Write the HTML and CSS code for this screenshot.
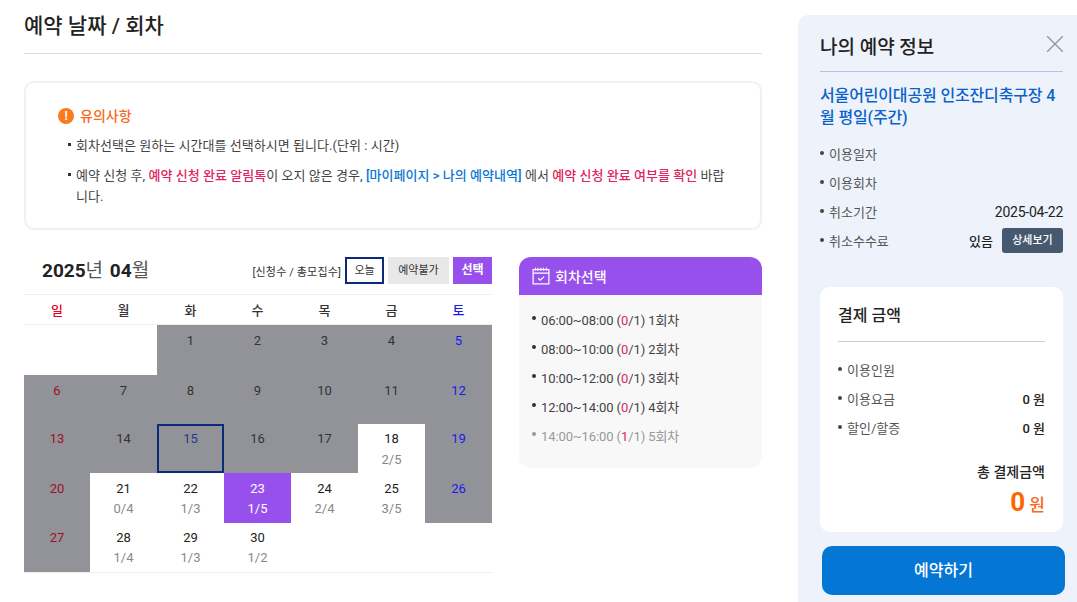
FILE: index.html
```html
<!DOCTYPE html>
<html lang="ko">
<head>
<meta charset="utf-8">
<title>예약 날짜 / 회차</title>
<link rel="stylesheet" href="styles.css">
</head>
<body>
<div class="page">
  <main class="main">
    <h2 class="page-title">예약 날짜 / 회차</h2>
    <section class="notice">
      <h3 class="notice-title"><span class="notice-icon">!</span>유의사항</h3>
      <ul class="notice-list">
        <li>회차선택은 원하는 시간대를 선택하시면 됩니다.(단위 : 시간)</li>
        <li>예약 신청 후, <b class="red">예약 신청 완료 알림톡</b>이 오지 않은 경우, <b class="blue">[마이페이지 &gt; 나의 예약내역]</b> 에서 <b class="red">예약 신청 완료 여부를 확인</b> 바랍니다.</li>
      </ul>
    </section>
    <div class="booking">
      <section class="calendar">
        <div class="cal-head">
          <div class="cal-month"><b>2025</b>년 <b>04</b>월</div>
          <div class="cal-legend">
            <span class="legend-text">[신청수 / 총모집수]</span>
            <span class="legend today">오늘</span>
            <span class="legend closed">예약불가</span>
            <span class="legend picked">선택</span>
          </div>
        </div>
        <table class="cal-table">
          <thead>
            <tr><th class="sun">일</th><th>월</th><th>화</th><th>수</th><th>목</th><th>금</th><th class="sat">토</th></tr>
          </thead>
          <tbody>
            <tr class="r1"><td></td><td></td><td class="off">1</td><td class="off">2</td><td class="off">3</td><td class="off">4</td><td class="off sat">5</td></tr>
            <tr class="r2"><td class="off sun">6</td><td class="off">7</td><td class="off">8</td><td class="off">9</td><td class="off">10</td><td class="off">11</td><td class="off sat">12</td></tr>
            <tr class="r3"><td class="off sun">13</td><td class="off">14</td><td class="off now">15</td><td class="off">16</td><td class="off">17</td><td>18<span class="count wide">2/5</span></td><td class="off sat">19</td></tr>
            <tr class="r4"><td class="off sun">20</td><td>21<span class="count">0/4</span></td><td>22<span class="count">1/3</span></td><td class="sel">23<span class="count">1/5</span></td><td>24<span class="count">2/4</span></td><td>25<span class="count">3/5</span></td><td class="off sat">26</td></tr>
            <tr class="r5"><td class="off sun">27</td><td>28<span class="count">1/4</span></td><td>29<span class="count">1/3</span></td><td>30<span class="count">1/2</span></td><td></td><td></td><td></td></tr>
          </tbody>
        </table>
      </section>
      <section class="rounds">
        <h3 class="rounds-head">
          <svg class="rounds-icon" width="18" height="18" viewBox="0 0 18 18" fill="none" stroke="#fff" stroke-width="1.2">
            <rect x="1.1" y="2.6" width="15.8" height="14.3"/>
            <path d="M1 6.2H17M3.5 .8V3.6M6 .8V3.6M8.8 .8V3.6M11.5 .8V3.6M14.4 .8V3.6"/>
            <path d="M6.2 11.2L8.3 13.2L12 9.6"/>
          </svg>
          회차선택
        </h3>
        <ul class="rounds-list">
          <li>06:00~08:00 (<span class="zero">0</span>/1) 1회차</li>
          <li>08:00~10:00 (<span class="zero">0</span>/1) 2회차</li>
          <li>10:00~12:00 (<span class="zero">0</span>/1) 3회차</li>
          <li>12:00~14:00 (<span class="zero">0</span>/1) 4회차</li>
          <li class="full">14:00~16:00 (<span class="zero">1</span>/1) 5회차</li>
        </ul>
      </section>
    </div>
  </main>
  <aside class="side">
    <div class="side-head">
      <h2 class="side-title">나의 예약 정보</h2>
      <svg class="side-close" width="16" height="16" viewBox="0 0 16 16" fill="none" stroke="#8a94a3" stroke-width="1.3"><path d="M0 0L16 16M16 0L0 16"/></svg>
    </div>
    <p class="product">서울어린이대공원 인조잔디축구장 4월 평일(주간)</p>
    <ul class="info">
      <li><span class="label">이용일자</span></li>
      <li><span class="label">이용회차</span></li>
      <li><span class="label">취소기간</span><span class="date">2025-04-22</span></li>
      <li><span class="label">취소수수료</span><span class="fee"><b>있음</b><span class="detail">상세보기</span></span></li>
    </ul>
    <section class="pay">
      <h3 class="pay-title">결제 금액</h3>
      <ul class="info pay-info">
        <li><span class="label">이용인원</span></li>
        <li><span class="label">이용요금</span><b>0 원</b></li>
        <li><span class="label">할인/할증</span><b>0 원</b></li>
      </ul>
      <div class="total-label">총 결제금액</div>
      <div class="total"><b>0</b> 원</div>
    </section>
    <div class="submit">예약하기</div>
  </aside>
</div>
</body>
</html>
```

FILE: styles.css
```css
* { box-sizing: border-box; }
html, body { margin: 0; height: 602px; overflow: hidden; background: #fff; }
body { font-family: Roboto, "Noto Sans CJK KR", sans-serif; color: #222; font-size: 13px; }
ul { list-style: none; margin: 0; padding: 0; }
h2, h3, p { margin: 0; }

.page { display: flex; gap: 36px; padding-left: 24px; }
.main { width: 738px; flex: none; }
.page-title { height: 54px; padding-top: 11px; border-bottom: 1px solid #dcdcdc; font-size: 21px; line-height: 30px; font-weight: 500; color: #222; }

.notice { margin-top: 27px; height: 149px; border: 2px solid #eef1f6; border-radius: 10px; padding: 23px 32px 0; }
.notice-title { display: flex; align-items: center; gap: 6px; font-size: 14px; line-height: 20px; font-weight: 500; color: #f8691c; }
.notice-icon { width: 16px; height: 16px; border-radius: 50%; background: #f97b1d; color: #fff; font-size: 12px; line-height: 16px; text-align: center; font-weight: 700; }
.notice-list { margin-top: 9px; padding-left: 10px; }
.notice-list li { position: relative; padding-left: 8px; font-size: 13px; line-height: 21px; color: #444; margin-bottom: 9px; letter-spacing: .04px; }
.notice-list li::before { content: ""; position: absolute; left: 0; top: 8px; width: 3px; height: 3px; background: #333; }
.red { color: #e0245e; font-weight: 500; }
.blue { color: #0b77d5; font-weight: 500; }

.booking { display: flex; gap: 27px; margin-top: 27px; }
.calendar { width: 468px; flex: none; }
.cal-head { display: flex; justify-content: space-between; align-items: flex-start; height: 37px; }
.cal-month { padding-left: 18px; font-size: 19px; line-height: 27px; color: #555; word-spacing: 2px; }
.cal-month b { color: #222; font-weight: 700; }
.cal-legend { display: flex; align-items: center; gap: 4px; }
.legend-text { font-size: 11px; color: #333; letter-spacing: .15px; }
.legend { display: block; height: 27px; line-height: 27px; text-align: center; font-size: 11px; color: #333; }
.today { width: 39px; border: 2px solid #0b2a7a; line-height: 24px; background: #fff; }
.closed { width: 61px; background: #e8e8e8; }
.picked { width: 39px; background: #9850ec; color: #fff; font-size: 12px; font-weight: 700; }

.cal-table { width: 468px; border-collapse: collapse; table-layout: fixed; }
.cal-table th { height: 30px; border-top: 1px solid #eee; border-bottom: 1px solid #eee; font-size: 13px; font-weight: 500; color: #333; padding: 0; }
.cal-table th:first-child { width: 66px; }
.cal-table th.sun { color: #e60023; }
.cal-table th.sat { color: #1a1aee; }
.cal-table td { padding: 6px 0 0; vertical-align: top; text-align: center; font-size: 13px; line-height: 20px; color: #222; }
.cal-table tbody tr:last-child { border-bottom: 1px solid #eee; }
.r1 td, .r4 td, .r5 td { height: 50px; }
.r2 td, .r3 td { height: 49px; }
.cal-table .r3 td, .cal-table .r5 td { padding-top: 5px; }
.count { display: block; color: #888; font-size: 13px; }
.count.wide { margin-top: 1px; }
.cal-table td.off { background: #929398; color: #333; }
.cal-table td.off.sun { color: #a01020; }
.cal-table td.off.sat { color: #1a1aee; }
.cal-table td.now { outline: 2px solid #0b2a7a; outline-offset: -2px; color: #1f3b8f; }
.cal-table td.sel { background: #9850ec; color: #fff; }
.sel .count { color: #fff; }

.rounds { width: 243px; flex: none; height: 211px; border-radius: 12px; background: #f8f8f8; overflow: hidden; }
.rounds-head { display: flex; align-items: center; gap: 5px; height: 38px; padding-left: 13px; background: #9850ec; color: #fff; font-size: 14px; font-weight: 500; }
.rounds-list { padding: 11px 13px 0 13px; }
.rounds-list li { position: relative; padding-left: 9px; height: 29px; font-size: 13px; line-height: 29px; color: #444; letter-spacing: -.1px; }
.rounds-list li::before { content: ""; position: absolute; left: 0; top: 10px; width: 4px; height: 4px; border-radius: 50%; background: #333; }
.rounds-list li.full { color: #999; }
.rounds-list li.full::before { background: #999; }
.zero { color: #e0245e; }

.side { width: 279px; flex: none; margin-top: 15px; height: 587px; background: #eef3fb; border-radius: 10px 0 0 0; padding: 0 14px 0 22px; }
.side-head { display: flex; justify-content: space-between; align-items: center; height: 57px; border-bottom: 1px solid #b4c3e4; padding-top: 4px; }
.side-title { font-size: 19px; font-weight: 500; color: #222; }
.side-close { margin-top: -3px; }
.product { margin-top: 13px; font-size: 16px; line-height: 22px; font-weight: 500; color: #0b62c9; letter-spacing: -.15px; }
.info { margin-top: 10px; }
.info li { position: relative; display: flex; justify-content: space-between; align-items: center; height: 29px; padding-left: 9px; font-size: 13px; color: #555; }
.info li::before { content: ""; position: absolute; left: 0; top: 12px; width: 4px; height: 4px; border-radius: 50%; background: #444; }
.date { color: #222; font-size: 14px; letter-spacing: -.25px; }
.fee { display: flex; align-items: center; gap: 9px; }
.fee b { color: #222; font-weight: 500; }
.detail { width: 61px; height: 25px; line-height: 25px; text-align: center; border-radius: 3px; background: #46596f; color: #fff; font-size: 11px; font-weight: 500; }

.pay { margin-top: 32px; height: 245px; background: #fff; border-radius: 10px; padding: 0 18px; }
.pay-title { height: 55px; padding-top: 17px; border-bottom: 1px solid #ccc; font-size: 16px; line-height: 24px; font-weight: 500; color: #222; }
.pay-info { margin-top: 13px; }
.pay-info b { color: #222; font-weight: 500; font-size: 13px; }
.total-label { margin-top: 20px; text-align: right; font-size: 14px; line-height: 20px; font-weight: 500; color: #222; }
.total { margin-top: 3px; text-align: right; font-size: 17px; line-height: 34px; font-weight: 500; color: #f8691c; }
.total b { font-size: 26px; font-weight: 700; color: #ff6600; }

.submit { margin-top: 14px; margin-left: 2px; margin-right: -2px; height: 49px; line-height: 49px; border-radius: 10px; background: #0477d5; color: #fff; text-align: center; font-size: 16px; font-weight: 500; }
```
